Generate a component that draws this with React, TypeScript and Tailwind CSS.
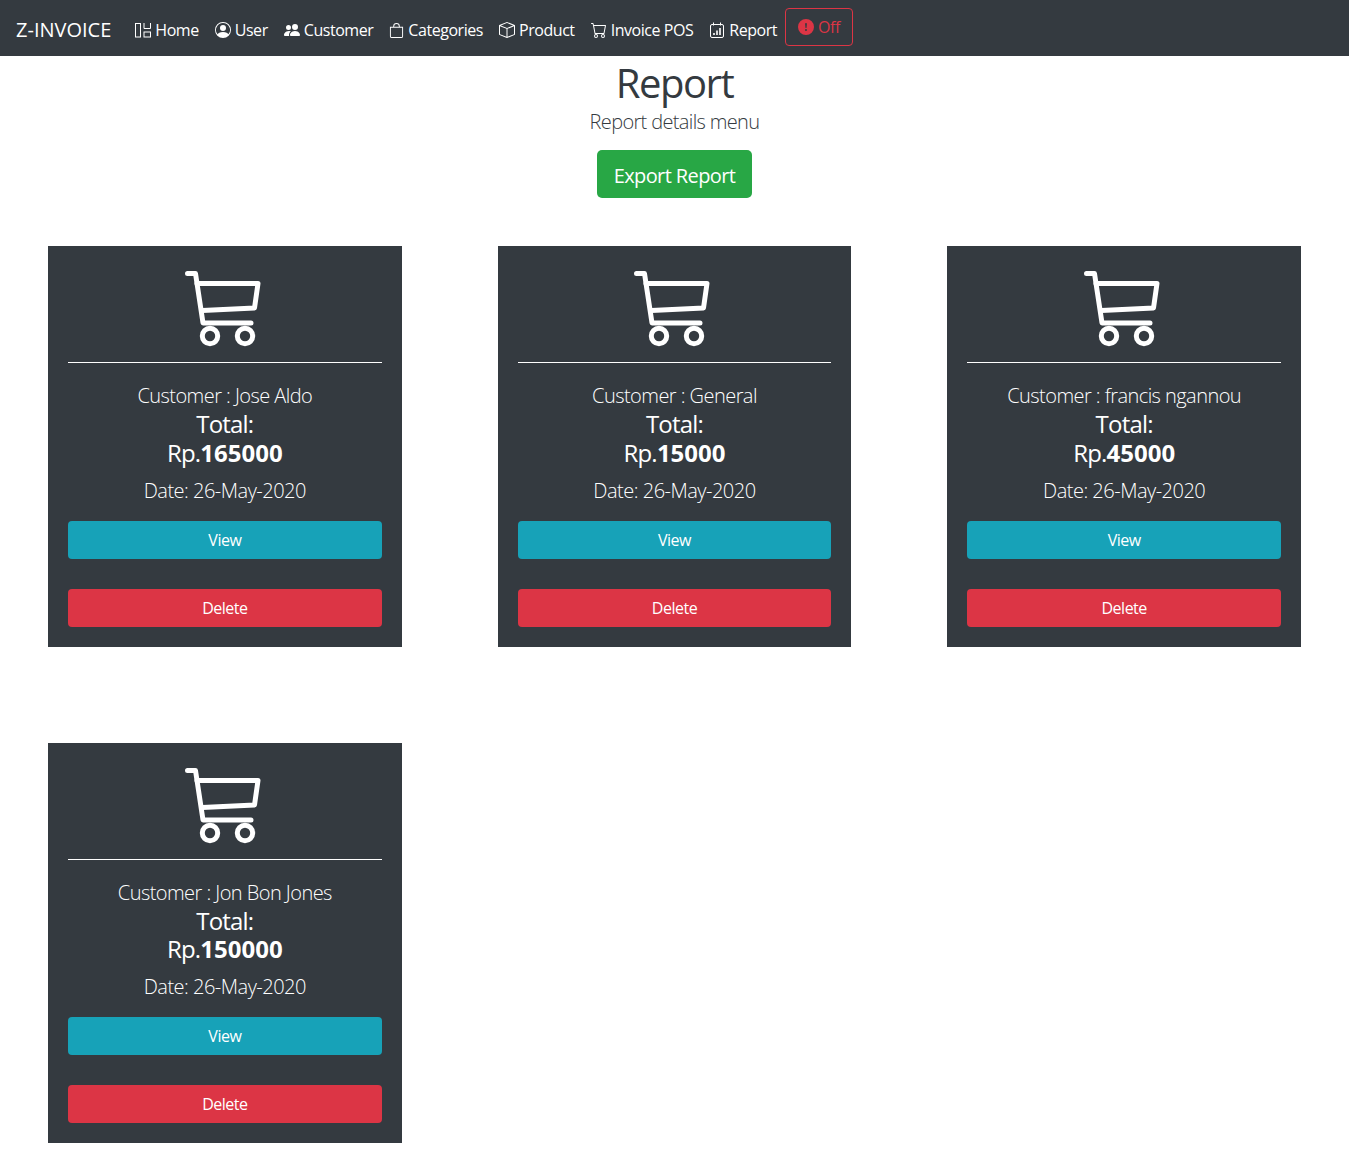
import { BsBag, BsBox, BsCart, BsExclamationCircleFill, BsPeopleFill, BsPersonCircle } from "react-icons/bs";

const font = { fontFamily: '"Open Sans", "Noto Sans", sans-serif' };

const HomeIcon = () => (
  <svg width="17" height="16" viewBox="0 0 17 16" fill="none" stroke="currentColor" strokeWidth="1">
    <rect x="1.5" y="1.5" width="5" height="13.5" />
    <path d="M10 1v5.5h6.5V1" />
    <rect x="10" y="10" width="6.5" height="5" />
  </svg>
);

const ReportIcon = () => (
  <svg width="16" height="16" viewBox="0 0 16 16" fill="none" stroke="currentColor">
    <rect x="1.5" y="2.5" width="13" height="13" rx="1.5" />
    <path d="M4.5 0.5v3M11.5 0.5v3" />
    <path d="M5 13v-2M8 13V8.5M11 13V6" strokeWidth="1.6" />
  </svg>
);

const BigCart = () => (
  <svg width="96" height="96" viewBox="0 0 96 96" fill="none" stroke="white" strokeWidth="5" strokeLinecap="round" strokeLinejoin="round" className="mx-auto block">
    <path d="M10.5 7.5h8l7.5 49.5h48" />
    <path d="M20 17.5h61l-3.5 24.5-52 2.5" />
    <circle cx="33" cy="70" r="7.7" />
    <circle cx="68" cy="70" r="7.7" />
  </svg>
);

const links = [
  { label: "Home", icon: <HomeIcon /> },
  { label: "User", icon: <BsPersonCircle size={16} /> },
  { label: "Customer", icon: <BsPeopleFill size={16} /> },
  { label: "Categories", icon: <BsBag size={15} /> },
  { label: "Product", icon: <BsBox size={16} /> },
  { label: "Invoice POS", icon: <BsCart size={16} /> },
  { label: "Report", icon: <ReportIcon /> },
];

const reports = [
  { customer: "Jose Aldo", total: "165000" },
  { customer: "General", total: "15000" },
  { customer: "francis ngannou", total: "45000" },
  { customer: "Jon Bon Jones", total: "150000" },
];

const ReportCard = ({ customer, total }: { customer: string; total: string }) => (
  <div className="bg-[#343a40] px-5 pt-5 pb-5 text-center text-white">
    <BigCart />
    <hr className="border-t border-white" />
    <p className="mt-[18px] text-[20px] leading-[30px] font-light tracking-[-0.55px]">Customer : {customer}</p>
    <h4 className="-mt-px text-[24px] leading-[28.8px] font-normal tracking-[-0.8px]">
      Total:
      <br />
      Rp.<b className="font-bold tracking-normal">{total}</b>
    </h4>
    <p className="mt-[8px] mb-[15px] text-[20px] leading-[30px] font-light tracking-[-0.5px]">Date: 26-May-2020</p>
    <button className="block h-[38px] w-full rounded-[4px] bg-[#17a2b8] text-[16px] tracking-[-0.5px] text-white">View</button>
    <button className="mt-[30px] block h-[38px] w-full rounded-[4px] bg-[#dc3545] text-[16px] tracking-[-0.5px] text-white">Delete</button>
  </div>
);

export default function App() {
  return (
    <div style={font} className="min-h-[1173px] bg-white text-[#343a40]">
      <nav className="flex h-14 items-center bg-[#343a40] pt-1 pl-4 text-white">
        <a className="mr-[15px] text-[20px]">Z-INVOICE</a>
        {links.map((l) => (
          <a key={l.label} className="flex items-center gap-1 px-2 text-[16px] tracking-[-0.45px] text-white">
            {l.icon}
            {l.label}
          </a>
        ))}
        <button className="-mt-[6px] flex h-[38px] items-center gap-1 rounded-[4px] border border-[#dc3545] px-3 text-[16px] tracking-[-0.5px] text-[#dc3545]">
          <BsExclamationCircleFill size={16} />
          Off
        </button>
      </nav>

      <header className="text-center">
        <h1 className="pt-[3px] text-[40px] leading-[48px] font-normal tracking-[-1.5px]">Report</h1>
        <p className="text-[20px] leading-[30px] font-light tracking-[-0.65px]">Report details menu</p>
        <button className="mt-[13px] h-12 w-[155px] rounded-[5px] bg-[#28a745] pt-1 text-[20px] tracking-[-0.6px] text-white">Export Report</button>
      </header>

      <main className="mt-12 grid grid-cols-3 gap-x-24 gap-y-24 px-12">
        {reports.map((r) => (
          <ReportCard key={r.customer} {...r} />
        ))}
      </main>
    </div>
  );
}
